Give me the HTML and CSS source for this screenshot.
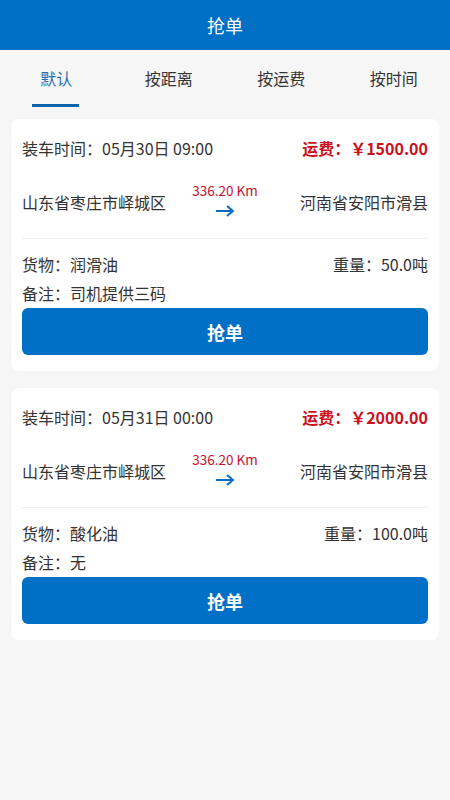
FILE: index.html
```html
<!DOCTYPE HTML>
<html lang="zh-CN">

<head>
    <title>抢单</title>
    <meta charset="utf-8">
    <meta name="viewport" content="width=device-width, initial-scale=1">
    <link rel="stylesheet" href="styles.css">
</head>

<body>
    <div class="header">抢单</div>

    <div class="tabs">
        <div class="tab active">默认</div>
        <div class="tab">按距离</div>
        <div class="tab">按运费</div>
        <div class="tab">按时间</div>
    </div>

    <div class="list">
        <div class="card">
            <div class="row">
                <span>装车时间：05月30日 09:00</span>
                <span class="price">运费：￥1500.00</span>
            </div>
            <div class="route">
                <span class="place">山东省枣庄市峄城区</span>
                <div class="distance">
                    <span class="km">336.20 Km</span>
                    <svg class="arrow" width="20" height="12" viewBox="0 0 20 12">
                        <path d="M1 6 H18 M12 1 L18 6 L12 11" fill="none" stroke="#0a6cc0" stroke-width="2" />
                    </svg>
                </div>
                <span class="place end">河南省安阳市滑县</span>
            </div>
            <div class="info">
                <div class="row">
                    <span>货物：润滑油</span>
                    <span>重量：50.0吨</span>
                </div>
                <div class="row">
                    <span>备注：司机提供三码</span>
                </div>
            </div>
            <button type="button" class="button">抢单</button>
        </div>

        <div class="card">
            <div class="row">
                <span>装车时间：05月31日 00:00</span>
                <span class="price">运费：￥2000.00</span>
            </div>
            <div class="route">
                <span class="place">山东省枣庄市峄城区</span>
                <div class="distance">
                    <span class="km">336.20 Km</span>
                    <svg class="arrow" width="20" height="12" viewBox="0 0 20 12">
                        <path d="M1 6 H18 M12 1 L18 6 L12 11" fill="none" stroke="#0a6cc0" stroke-width="2" />
                    </svg>
                </div>
                <span class="place end">河南省安阳市滑县</span>
            </div>
            <div class="info">
                <div class="row">
                    <span>货物：酸化油</span>
                    <span>重量：100.0吨</span>
                </div>
                <div class="row">
                    <span>备注：无</span>
                </div>
            </div>
            <button type="button" class="button">抢单</button>
        </div>
    </div>
</body>

</html>
```

FILE: styles.css
```css
body {
    font-family: "Noto Sans CJK SC", "Noto Sans", sans-serif;
    background-color: #f6f6f6;
    color: #333;
    margin: 0;
    padding: 0;
    font-size: 16px;
}

.header {
    height: 50px;
    line-height: 50px;
    background-color: #0070c6;
    color: #fff;
    font-size: 18px;
    text-align: center;
}

.tabs {
    display: flex;
    height: 68px;
}

.tab {
    flex: 1;
    display: flex;
    justify-content: center;
    padding-top: 16px;
    font-size: 16px;
    line-height: 24px;
    color: #333;
    position: relative;
}

.tab.active {
    color: #2a6fb0;
}

.tab.active::after {
    content: "";
    position: absolute;
    top: 54px;
    left: 50%;
    width: 47px;
    height: 3px;
    margin-left: -24px;
    background-color: #0a63ad;
}

.list {
    padding: 1px 11px;
}

.card {
    background: #fff;
    border-radius: 8px;
    padding: 17px 11px 16px;
    margin-bottom: 17px;
}

.row {
    display: flex;
    justify-content: space-between;
    line-height: 24px;
}

.price {
    color: #cc1020;
    font-weight: bold;
}

.route {
    display: grid;
    grid-template-columns: 1fr auto 1fr;
    align-items: center;
    margin-top: 21px;
    padding-bottom: 21px;
    border-bottom: 1px solid #eee;
}

.place {
    line-height: 24px;
    padding-top: 6px;
}

.place.end {
    text-align: right;
}

.distance {
    display: flex;
    flex-direction: column;
    align-items: center;
}

.km {
    color: #c8102e;
    font-size: 13.5px;
    line-height: 18px;
}

.arrow {
    margin-top: 6px;
}

.info {
    padding-top: 11px;
}

.info .row {
    line-height: 29px;
}

.button {
    display: block;
    width: 100%;
    height: 47px;
    margin-top: 0;
    border: none;
    border-radius: 6px;
    background-color: #0070c6;
    color: #fff;
    font-family: inherit;
    font-size: 18px;
    font-weight: bold;
}
```
